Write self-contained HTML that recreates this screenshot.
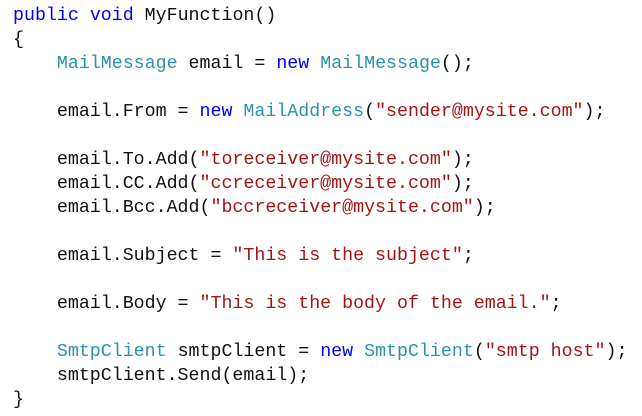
<!DOCTYPE html>
<html><head><style>
html,body{margin:0;padding:0;background:#fff;width:642px;height:416px;overflow:hidden}
pre{margin:0;position:absolute;left:13px;top:4px;font-family:"Liberation Mono",monospace;font-size:18.3px;line-height:24px;color:#111}
.k{color:#0000ff}.t{color:#2b91af}.s{color:#a31515}
</style></head><body>
<pre><span class="k">public</span> <span class="k">void</span> MyFunction()
{
    <span class="t">MailMessage</span> email = <span class="k">new</span> <span class="t">MailMessage</span>();

    email.From = <span class="k">new</span> <span class="t">MailAddress</span>(<span class="s">"sender@mysite.com"</span>);

    email.To.Add(<span class="s">"toreceiver@mysite.com"</span>);
    email.CC.Add(<span class="s">"ccreceiver@mysite.com"</span>);
    email.Bcc.Add(<span class="s">"bccreceiver@mysite.com"</span>);

    email.Subject = <span class="s">"This is the subject"</span>;

    email.Body = <span class="s">"This is the body of the email."</span>;

    <span class="t">SmtpClient</span> smtpClient = <span class="k">new</span> <span class="t">SmtpClient</span>(<span class="s">"smtp host"</span>);
    smtpClient.Send(email);
}</pre>
</body></html>
